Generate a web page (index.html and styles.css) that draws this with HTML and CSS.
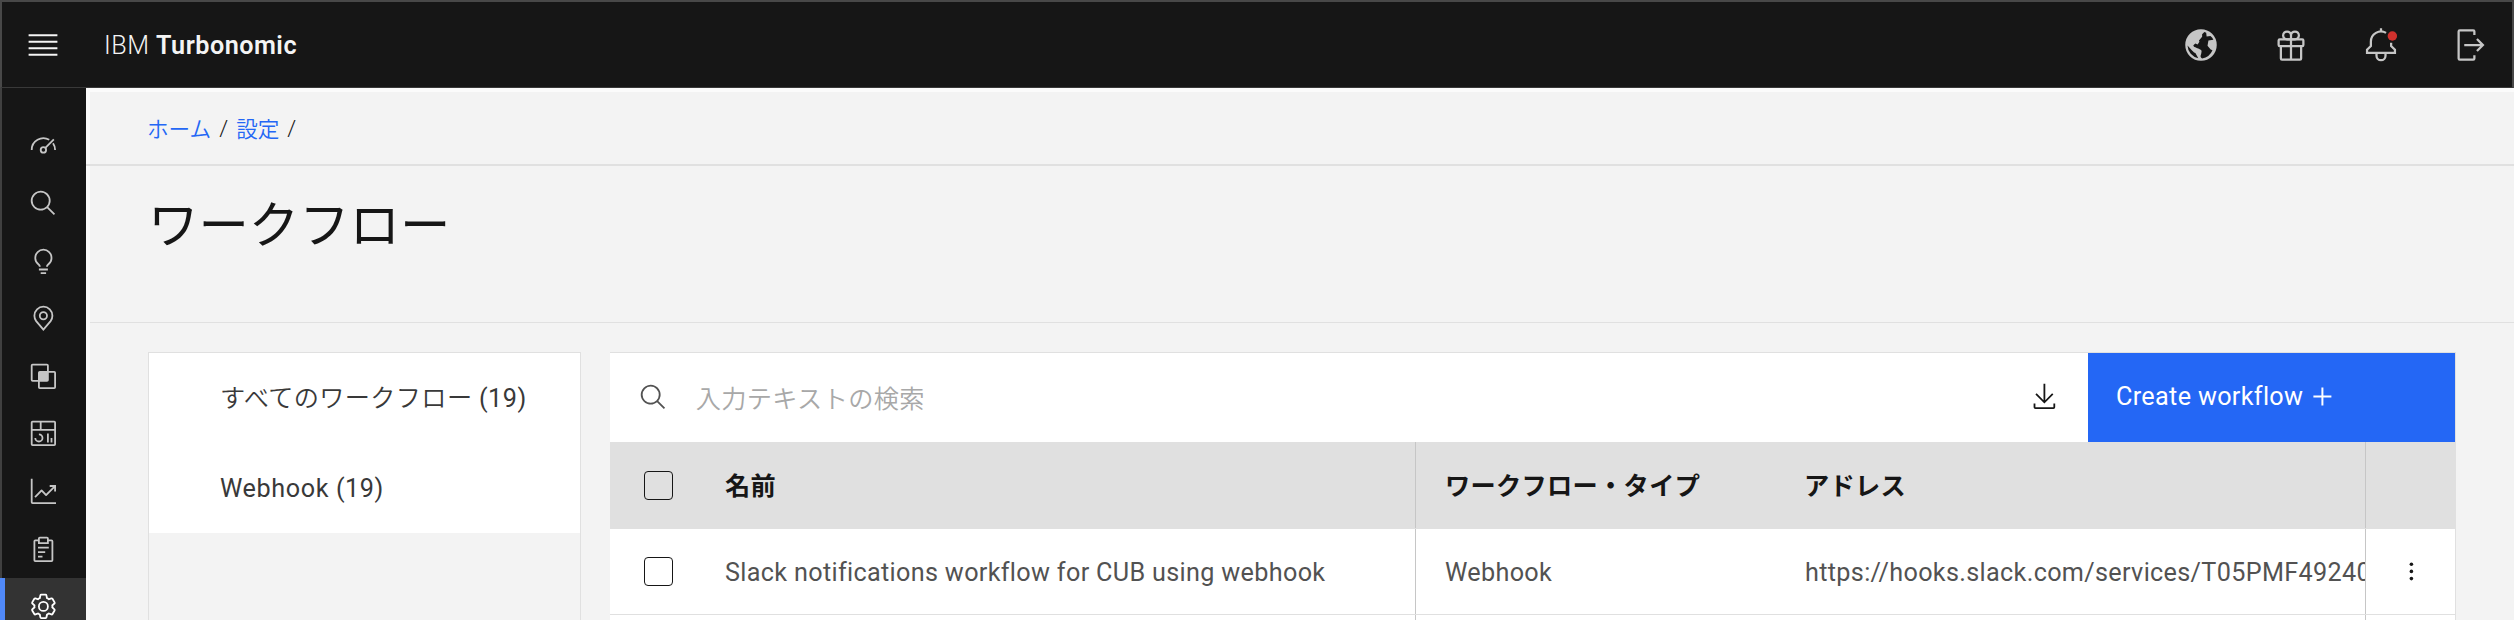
FILE: index.html
```html
<!DOCTYPE html>
<html lang="ja">
<head>
<meta charset="utf-8">
<title>IBM Turbonomic</title>
<link rel="stylesheet" href="styles.css">
</head>
<body>
<div class="app">
  <header class="header">
    <button class="menu-btn" aria-label="Menu"><svg class="icon-lg" viewBox="0 0 20 20"><path d="M2 14.8H18V16H2zM2 11.2H18V12.4H2zM2 7.6H18V8.8H2zM2 4H18V5.2H2z"/></svg></button>
    <div class="brand">IBM <b>Turbonomic</b></div>
    <nav class="header-actions">
      <svg class="icon-lg" viewBox="0 0 32 32"><path d="M16 2A14 14 0 1 0 30 16 14 14 0 0 0 16 2ZM4 16.5 7.4 20.2C8.6 21.3 9.2 22.6 11 23L13.6 27.7A12 12 0 0 1 4 16.5ZM17 27.9C14.5 26.5 16.2 25 16.4 22.5C17 20.6 15.4 20 13.4 19.2C12 18 9.5 18.4 9.2 16.2L11 14.6 13 15.6 14.6 13.2 14.2 12 17 8.6V6.4L19 4.5 20.6 5 21 8.4 24.4 8 26 9.6 27 11.4 22.6 12 21.8 16.6 24.6 20 26.2 20.6A12 12 0 0 1 17 27.9Z"/></svg>
      <svg class="icon-lg line" viewBox="0 0 32 32"><rect x="5" y="11" width="22" height="6" rx="1"/><path d="M7 17V28a1 1 0 0 0 1 1H24a1 1 0 0 0 1-1V17M16 11V29M16 11V7.5A3.5 3.5 0 1 0 12.5 11H16M16 7.5A3.5 3.5 0 1 1 19.5 11H16"/></svg>
      <svg class="icon-lg line" viewBox="0 0 32 32"><path d="M20.5 5.2A9 9 0 0 0 7 13V17L3.6 20.2V23H28.4V20.2L25 17V14M16 4V1M12 23V25.5a4 4 0 0 0 8 0V23"/><circle class="alert-dot" cx="26.1" cy="8" r="4.2"/></svg>
      <svg class="icon-lg" viewBox="0 0 32 32"><path d="M6 30H18a2 2 0 0 0 2-2V25H18v3H6V4H18V7h2V4a2 2 0 0 0-2-2H6A2 2 0 0 0 4 4V28A2 2 0 0 0 6 30Z"/><path d="M20.586 20.586 24.172 17H10V15H24.172L20.586 11.414 22 10 28 16 22 22Z"/></svg>
    </nav>
  </header>

  <div class="body">
    <nav class="sidebar">
      <a class="side-item"><svg class="icon line" viewBox="0 0 32 32"><circle cx="16" cy="21" r="3"/><path d="M18.2 18.8 27.6 9.4M3 21A13 13 0 0 1 22.5 9.74M26.7 13.7A13 13 0 0 1 29 21"/></svg></a>
      <a class="side-item"><svg class="icon" viewBox="0 0 32 32"><path d="M29 27.586 21.448 20.034a11.018 11.018 0 1 0-1.414 1.414L27.586 29ZM4 13a9 9 0 1 1 9 9A9.01 9.01 0 0 1 4 13Z"/></svg></a>
      <a class="side-item"><svg class="icon" viewBox="0 0 32 32"><path d="M11 24H21V26H11zM13 28H19V30H13zM16 2A10 10 0 0 0 6 12a9.19 9.19 0 0 0 3.46 7.62C10.47 20.54 11 21.12 11 22h2c0-1.84-1.11-2.87-2.19-3.86A7.2 7.2 0 0 1 8 12a8 8 0 0 1 16 0 7.2 7.2 0 0 1-2.82 6.14C20.11 19.14 19 20.14 19 22h2c0-.88.53-1.47 1.54-2.39A9.18 9.18 0 0 0 26 12 10 10 0 0 0 16 2Z"/></svg></a>
      <a class="side-item"><svg class="icon line" viewBox="0 0 32 32"><circle cx="16" cy="13" r="4"/><path d="M16 28.4 8 19A9.9 9.9 0 0 1 6 13a10 10 0 0 1 20 0 9.9 9.9 0 0 1-2 6Z"/></svg></a>
      <a class="side-item"><svg class="icon" viewBox="0 0 32 32"><path d="M28 10H22V4a2 2 0 0 0-2-2H4A2 2 0 0 0 2 4V20a2 2 0 0 0 2 2h6v6a2 2 0 0 0 2 2H28a2 2 0 0 0 2-2V12A2 2 0 0 0 28 10ZM4 20V4H20v6H12a2 2 0 0 0-2 2v8Zm8 8V22h8a2 2 0 0 0 2-2V12h6V28Z"/></svg></a>
      <a class="side-item"><svg class="icon" viewBox="0 0 32 32"><path d="M24 21H26V26H24zM20 16H22V26H20zM11 26a5 5 0 0 1-5-5H8a3 3 0 1 0 3-3V16a5 5 0 0 1 0 10ZM28 2H4A2 2 0 0 0 2 4V28a2 2 0 0 0 2 2H28a2 2 0 0 0 2-2V4A2 2 0 0 0 28 2Zm0 9H14V4H28ZM12 4v7H4V4ZM4 28V13H28V28Z"/></svg></a>
      <a class="side-item"><svg class="icon" viewBox="0 0 32 32"><path d="M4 2H2V28a2 2 0 0 0 2 2H30V28H4ZM30 9H23v2h3.59L19 18.59l-4.29-4.3a1 1 0 0 0-1.42 0L6 21.59 7.41 23 14 16.41l4.29 4.3a1 1 0 0 0 1.42 0L28 12.41V16h2Z"/></svg></a>
      <a class="side-item"><svg class="icon" viewBox="0 0 32 32"><path d="M10 18H18V20H10zM10 13H22V15H10zM10 23H15V25H10zM25 5H22V4a2 2 0 0 0-2-2H12a2 2 0 0 0-2 2V5H7A2 2 0 0 0 5 7V28a2 2 0 0 0 2 2H25a2 2 0 0 0 2-2V7A2 2 0 0 0 25 5ZM12 4h8V8H12ZM25 28H7V7h3v3H22V7h3Z"/></svg></a>
      <a class="side-item active"><svg class="icon" viewBox="0 0 32 32"><path d="M27,16.76c0-.25,0-.5,0-.76s0-.51,0-.77l1.92-1.68A2,2,0,0,0,29.3,11L26.94,7a2,2,0,0,0-1.73-1,2,2,0,0,0-.64.1l-2.43.82a11.35,11.35,0,0,0-1.31-.75l-.51-2.52a2,2,0,0,0-2-1.61H13.64a2,2,0,0,0-2,1.61l-.51,2.52a11.48,11.48,0,0,0-1.32.75L7.43,6.06A2,2,0,0,0,6.79,6,2,2,0,0,0,5.06,7L2.7,11a2,2,0,0,0,.41,2.51L5,15.24c0,.25,0,.5,0,.76s0,.51,0,.77L3.11,18.45A2,2,0,0,0,2.7,21L5.06,25a2,2,0,0,0,1.73,1,2,2,0,0,0,.64-.1l2.43-.82a11.35,11.35,0,0,0,1.31.75l.51,2.52a2,2,0,0,0,2,1.61h4.72a2,2,0,0,0,2-1.61l.51-2.52a11.48,11.48,0,0,0,1.32-.75l2.42.82a2,2,0,0,0,.64.1,2,2,0,0,0,1.73-1L29.3,21a2,2,0,0,0-.41-2.51ZM25.21,24l-3.43-1.16a8.86,8.86,0,0,1-2.71,1.57L18.36,28H13.64l-.71-3.55a9.36,9.36,0,0,1-2.7-1.57L6.79,24,4.43,20l2.72-2.4a8.9,8.9,0,0,1,0-3.13L4.43,12,6.79,8l3.43,1.16a8.86,8.86,0,0,1,2.71-1.57L13.64,4h4.72l.71,3.55a9.36,9.36,0,0,1,2.7,1.57L25.21,8,27.57,12l-2.72,2.4a8.9,8.9,0,0,1,0,3.13L27.57,20ZM16,22a6,6,0,1,1,6-6A5.94,5.94,0,0,1,16,22Zm0-10a3.91,3.91,0,0,0-4,4,3.91,3.91,0,0,0,4,4,3.91,3.91,0,0,0,4-4A3.91,3.91,0,0,0,16,12Z"/></svg></a>
    </nav>

    <main class="main">
      <div class="crumbs"><a>ホーム</a><i>/</i><a>設定</a><i>/</i></div>
      <div class="title-bar"><h1>ワークフロー</h1></div>
      <div class="content">
        <aside class="filters">
          <div class="filter">すべてのワークフロー <span class="latin">(19)</span></div>
          <div class="filter"><span class="latin">Webhook (19)</span></div>
        </aside>
        <section class="table">
          <div class="toolbar">
            <svg class="icon search-icon" viewBox="0 0 32 32"><path d="M29 27.586 21.448 20.034a11.018 11.018 0 1 0-1.414 1.414L27.586 29ZM4 13a9 9 0 1 1 9 9A9.01 9.01 0 0 1 4 13Z"/></svg>
            <span class="placeholder">入力テキストの検索</span>
            <svg class="icon download-icon" viewBox="0 0 32 32"><path d="M26 24v4H6V24H4v4a2 2 0 0 0 2 2H26a2 2 0 0 0 2-2V24ZM26 14 24.59 12.59 17 20.17V2H15V20.17L7.41 12.59 6 14 16 24Z"/></svg>
            <button class="create">Create workflow<svg class="icon" viewBox="0 0 32 32"><path d="M17.1 14.9V6H14.9v8.900H6v2.200h8.900V26h2.200V17.100H26V14.900Z"/></svg></button>
          </div>
          <div class="row head">
            <div class="cell check"><span class="box"></span></div>
            <div class="cell name">名前</div>
            <div class="cell type">ワークフロー・タイプ</div>
            <div class="cell addr">アドレス</div>
            <div class="cell more"></div>
          </div>
          <div class="row entry">
            <div class="cell check"><span class="box"></span></div>
            <div class="cell name">Slack notifications workflow for CUB using webhook</div>
            <div class="cell type">Webhook</div>
            <div class="cell addr">https://hooks.slack.com/services/T05PMF49240</div>
            <div class="cell more"><svg class="icon" viewBox="0 0 32 32"><circle cx="16" cy="8" r="2"/><circle cx="16" cy="16" r="2"/><circle cx="16" cy="24" r="2"/></svg></div>
          </div>
          <div class="row">
            <div class="cell check"></div>
            <div class="cell name"></div>
            <div class="cell type"></div>
            <div class="cell addr"></div>
            <div class="cell more"></div>
          </div>
        </section>
      </div>
    </main>
  </div>
</div>
</body>
</html>
```
FILE: styles.css
```css
* { box-sizing: border-box; }
body {
  margin: 0;
  font-family: Roboto, "Noto Sans CJK JP", sans-serif;
  font-size: 25.2px;
  letter-spacing: 0.33px;
  color: #161616;
  background: #f3f3f3;
}
button { font: inherit; letter-spacing: inherit; border: 0; padding: 0; background: none; }
svg { display: block; flex: none; fill: currentColor; }
.icon { width: 28.8px; height: 28.8px; }
.icon-lg { width: 36px; height: 36px; }
.line { fill: none; stroke: currentColor; stroke-width: 2; }
.alert-dot { fill: #d0312d; stroke: none; }

.app { height: 620px; overflow: hidden; display: flex; flex-direction: column; }

.header {
  height: 88px;
  flex: none;
  display: flex;
  align-items: center;
  padding-right: 23.5px;
  color: #f4f4f4;
  background: #161616;
  border: 2px solid #484848;
  border-bottom: 1px solid #393939;
}
.menu-btn { color: inherit; margin-left: 23px; }
.brand { margin-left: 43px; padding-top: 2px; font-weight: 300; white-space: pre; letter-spacing: 0.5px; }
.brand b { font-weight: 600; }
.header-actions { margin-left: auto; display: flex; gap: 54px; color: #c6c6c6; }

.body { flex: 1; display: flex; min-height: 0; }
.sidebar {
  width: 86px;
  flex: none;
  padding-top: 29px;
  color: #c6c6c6;
  background: #161616;
  border-left: 2px solid #404040;
}
.side-item { height: 57.6px; display: flex; align-items: center; justify-content: center; padding-right: 1px; }
.side-item.active {
  margin-left: -2px;
  padding-right: 4px;
  color: #fff;
  background: #333;
  border-left: 5px solid #5089f8;
}

.main { flex: 1; min-width: 0; border-top: 4px solid #fbfbfb; border-left: 4px solid #fbfbfb; display: flex; flex-direction: column; }
.crumbs {
  height: 74px;
  flex: none;
  margin-left: -4px;
  padding: 0 0 2px 61px;
  display: flex;
  align-items: center;
  border-bottom: 2px solid #e0e0e0;
  font-size: 21.6px;
  letter-spacing: 0;
}
.crumbs a { color: #2467f5; font-weight: 350; }
.crumbs i { width: 25px; padding-top: 2px; text-align: center; font-style: normal; font-size: 22.5px; font-weight: 300; }
.title-bar { height: 157px; flex: none; padding: 24px 0 0 58px; border-bottom: 1px solid #e0e0e0; }
h1 { margin: 0; font-size: 50.4px; font-weight: 400; letter-spacing: 0; line-height: 72px; }
.content { flex: 1; display: flex; gap: 29px; padding: 29px 58px 0; min-height: 0; }

.filters { width: 433px; flex: none; border: 1px solid #e0e0e0; border-bottom: 0; }
.filter { height: 90px; padding: 1px 0 0 71px; line-height: 90px; background: #fff; color: #393939; font-weight: 350; }
.latin { font-weight: 400; letter-spacing: 0.6px; }

.table { flex: 1; min-width: 0; border: solid #e0e0e0; border-width: 1px 1px 0 0; }
.toolbar { height: 89px; display: flex; align-items: center; background: #fff; }
.search-icon { margin-left: 29px; color: #525252; }
.placeholder { margin-left: 28px; padding-bottom: 2px; color: #a8a8a8; font-weight: 350; }
.download-icon { margin-left: auto; margin-right: 29px; margin-bottom: 3px; }
.create {
  width: 367px;
  align-self: stretch;
  display: flex;
  align-items: center;
  gap: 5px;
  padding: 0 0 2px 28px;
  color: #fff;
  background: #2467f5;
}
.row { height: 86px; display: grid; grid-template-columns: 86px 720px 359px 591px 1fr; background: #fff; border-bottom: 1px solid #e0e0e0; color: #525252; }
.row.head { height: 87px; background: #e0e0e0; color: #161616; font-weight: 600; }
.cell { display: flex; align-items: center; padding-left: 29px; white-space: nowrap; overflow: hidden; }
.head .cell { padding-bottom: 2px; }
.entry .cell { padding-top: 2px; }
.row .check { padding: 0 0 0 34px; }
.row .more { padding: 0 0 0 2px; justify-content: center; color: #161616; }
.cell.name, .cell.addr { border-right: 1px solid #c6c6c6; }
.entry .addr { padding-left: 30px; }
.box { width: 29px; height: 29px; border: 1.8px solid #161616; border-radius: 4px; }
```
